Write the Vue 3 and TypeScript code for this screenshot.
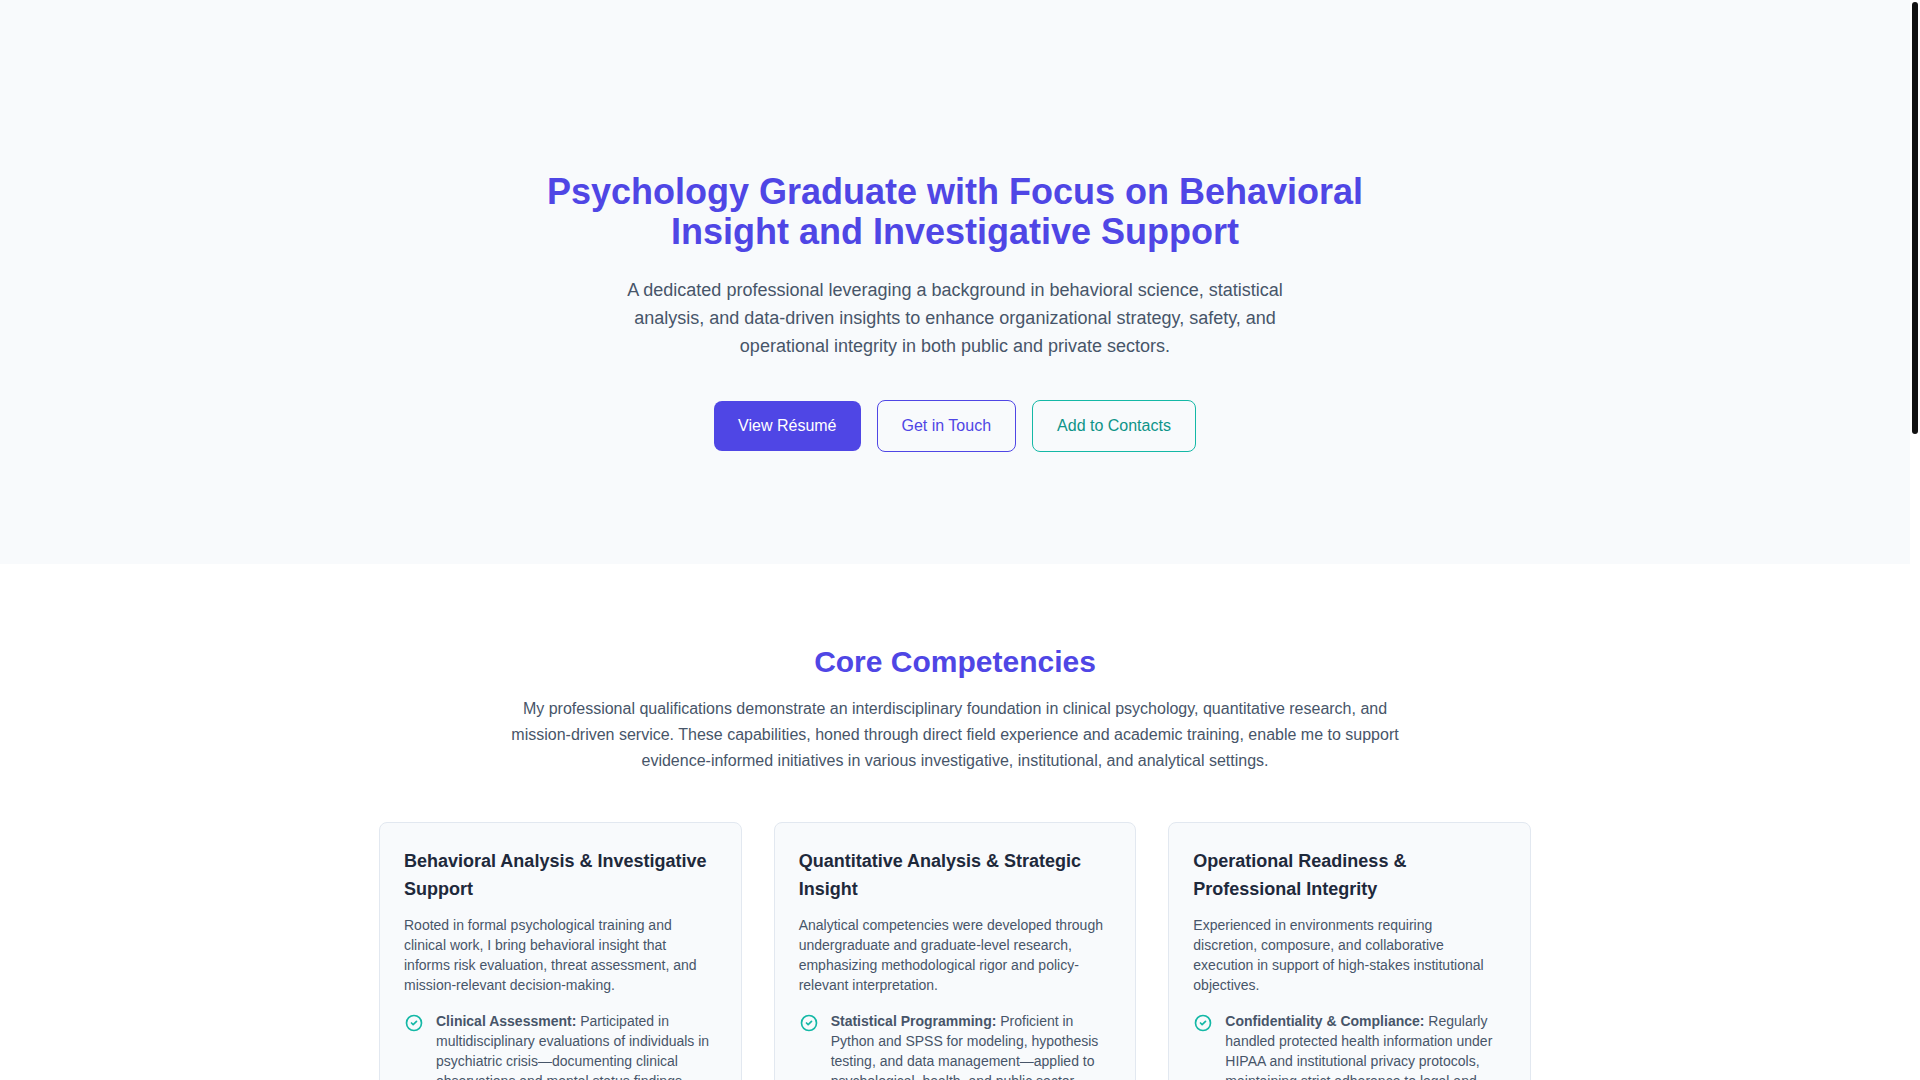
<script setup lang="ts">
interface Competency {
  title: string
  summary: string
  skill: string
  detail: string
}

const competencies: Competency[] = [
  {
    title: 'Behavioral Analysis & Investigative Support',
    summary:
      'Rooted in formal psychological training and clinical work, I bring behavioral insight that informs risk evaluation, threat assessment, and mission-relevant decision-making.',
    skill: 'Clinical Assessment:',
    detail:
      'Participated in multidisciplinary evaluations of individuals in psychiatric crisis—documenting clinical observations and mental status findings.',
  },
  {
    title: 'Quantitative Analysis & Strategic Insight',
    summary:
      'Analytical competencies were developed through undergraduate and graduate-level research, emphasizing methodological rigor and policy-relevant interpretation.',
    skill: 'Statistical Programming:',
    detail:
      'Proficient in Python and SPSS for modeling, hypothesis testing, and data management—applied to psychological, health, and public sector datasets.',
  },
  {
    title: 'Operational Readiness & Professional Integrity',
    summary:
      'Experienced in environments requiring discretion, composure, and collaborative execution in support of high-stakes institutional objectives.',
    skill: 'Confidentiality & Compliance:',
    detail:
      'Regularly handled protected health information under HIPAA and institutional privacy protocols, maintaining strict adherence to legal and ethical standards.',
  },
]
</script>

<template>
  <div class="shell">
    <main class="page">
      <section id="home" class="hero">
        <h1>Psychology Graduate with Focus on Behavioral Insight and Investigative Support</h1>
        <p class="lead">
          A dedicated professional leveraging a background in behavioral science, statistical
          analysis, and data-driven insights to enhance organizational strategy, safety, and
          operational integrity in both public and private sectors.
        </p>
        <nav class="actions" aria-label="Quick links">
          <a class="btn primary" href="#resume">View Résumé</a>
          <a class="btn outline" href="#contact">Get in Touch</a>
          <a class="btn teal" href="#vcard">Add to Contacts</a>
        </nav>
      </section>

      <section id="competencies" class="competencies">
        <h2>Core Competencies</h2>
        <p class="intro">
          My professional qualifications demonstrate an interdisciplinary foundation in clinical
          psychology, quantitative research, and mission-driven service. These capabilities, honed
          through direct field experience and academic training, enable me to support
          evidence-informed initiatives in various investigative, institutional, and analytical
          settings.
        </p>
        <div class="grid">
          <article v-for="item in competencies" :key="item.title" class="card">
            <h3>{{ item.title }}</h3>
            <p class="summary">{{ item.summary }}</p>
            <ul>
              <li>
                <svg class="check" viewBox="0 0 24 24" aria-hidden="true">
                  <path d="M9 12l2 2 4-4m6 2a9 9 0 11-18 0 9 9 0 0118 0z" />
                </svg>
                <span><strong>{{ item.skill }}</strong> {{ item.detail }}</span>
              </li>
            </ul>
          </article>
        </div>
      </section>
    </main>
    <div class="rail" aria-hidden="true"><div class="thumb"></div></div>
  </div>
</template>

<style>
body {
  margin: 0;
  background: #ffffff;
}
</style>

<style scoped>
.shell {
  display: flex;
  height: 100vh;
  overflow: hidden;
  font-family: Arial, "Liberation Sans", sans-serif;
  font-size: 16px;
  line-height: 26px;
  color: #475569;
}

.page {
  flex: 1;
  min-width: 0;
  overflow-y: auto;
  scrollbar-width: none;
}

.rail {
  flex: none;
  box-sizing: border-box;
  width: 10px;
  padding: 2px;
}

.thumb {
  height: 40vh;
  border-radius: 3px;
  background: #111111;
}

h1,
h2,
h3,
p,
ul {
  margin: 0;
}

.hero {
  display: flex;
  flex-direction: column;
  align-items: center;
  padding: 172px 24px 112px;
  background: #f8fafc;
  text-align: center;
}

h1 {
  max-width: 896px;
  margin-bottom: 24px;
  font-size: 36px;
  line-height: 40px;
  color: #4f46e5;
}

.lead {
  max-width: 672px;
  margin-bottom: 40px;
  font-size: 18px;
  line-height: 28px;
}

.actions {
  display: flex;
  flex-wrap: wrap;
  align-items: center;
  justify-content: center;
  gap: 16px;
}

.btn {
  padding: 12px 24px;
  border-radius: 8px;
  text-decoration: none;
}

.primary {
  background: #4f46e5;
  color: #ffffff;
}

.outline {
  border: 1px solid #4f46e5;
  color: #4f46e5;
}

.teal {
  border: 1px solid #14b8a6;
  color: #0d9488;
}

.competencies {
  display: flex;
  flex-direction: column;
  align-items: center;
  padding: 80px 24px;
}

h2 {
  margin-bottom: 16px;
  font-size: 30px;
  line-height: 36px;
  color: #4f46e5;
}

.intro {
  max-width: 896px;
  margin-bottom: 48px;
  text-align: center;
}

.grid {
  display: grid;
  grid-template-columns: repeat(3, minmax(0, 1fr));
  gap: 32px;
  width: 100%;
  max-width: 1152px;
}

.card {
  padding: 24px;
  border: 1px solid #e2e8f0;
  border-radius: 8px;
  background: #f8fafc;
  font-size: 14px;
  line-height: 20px;
}

h3 {
  margin-bottom: 12px;
  font-size: 18px;
  line-height: 28px;
  color: #1e293b;
}

.summary {
  margin-bottom: 16px;
  padding-right: 8px;
}

ul {
  padding: 0;
  list-style: none;
}

li {
  display: flex;
  align-items: flex-start;
  gap: 12px;
}

.check {
  flex: none;
  width: 20px;
  height: 20px;
  margin-top: 2px;
  fill: none;
  stroke: #14b8a6;
  stroke-width: 2;
  stroke-linecap: round;
  stroke-linejoin: round;
}
</style>
